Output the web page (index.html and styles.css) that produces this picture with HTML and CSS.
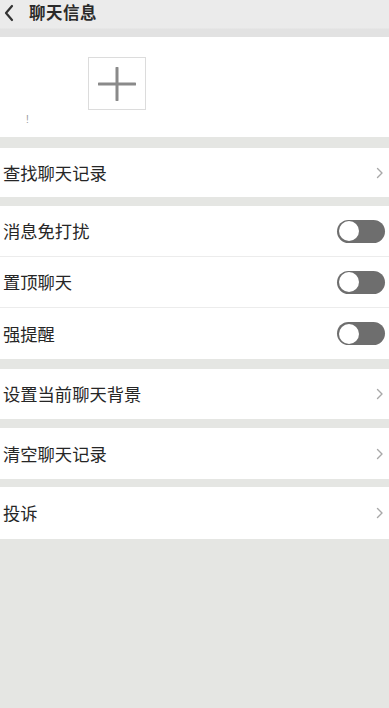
FILE: index.html
```html
<!DOCTYPE html>
<html lang="zh-CN">
<head>
<meta charset="utf-8">
<title>聊天信息</title>
<link rel="stylesheet" href="styles.css">
</head>
<body>
<div class="page">
  <header class="topbar">
    <svg class="back" width="12" height="18" viewBox="0 0 12 18"><path d="M9 2 L3 9 L9 16" fill="none" stroke="#333" stroke-width="2.2" stroke-linecap="round" stroke-linejoin="round"/></svg>
    <span class="title">聊天信息</span>
  </header>

  <section class="members">
    <div class="add-box">
      <svg width="38" height="34" viewBox="0 0 38 34"><path d="M1 17 H37 M19 1 V33" stroke="#8a8a8a" stroke-width="3" stroke-linecap="round"/></svg>
    </div>
    <span class="mark">!</span>
  </section>

  <div class="gap g1"></div>
  <div class="row r49"><span class="label">查找聊天记录</span><svg class="chev" width="8" height="12" viewBox="0 0 8 12"><path d="M1.5 1.5 L6 6 L1.5 10.5" fill="none" stroke="#a8a8a8" stroke-width="1.4" stroke-linecap="round" stroke-linejoin="round"/></svg></div>

  <div class="gap g2"></div>
  <div class="group">
    <div class="row r50 line"><span class="label">消息免打扰</span><span class="toggle"><span class="knob"></span></span></div>
    <div class="row r50 line"><span class="label">置顶聊天</span><span class="toggle"><span class="knob"></span></span></div>
    <div class="row r51"><span class="label">强提醒</span><span class="toggle"><span class="knob"></span></span></div>
  </div>

  <div class="gap g3"></div>
  <div class="row r50"><span class="label">设置当前聊天背景</span><svg class="chev" width="8" height="12" viewBox="0 0 8 12"><path d="M1.5 1.5 L6 6 L1.5 10.5" fill="none" stroke="#a8a8a8" stroke-width="1.4" stroke-linecap="round" stroke-linejoin="round"/></svg></div>

  <div class="gap g4"></div>
  <div class="row r51"><span class="label">清空聊天记录</span><svg class="chev" width="8" height="12" viewBox="0 0 8 12"><path d="M1.5 1.5 L6 6 L1.5 10.5" fill="none" stroke="#a8a8a8" stroke-width="1.4" stroke-linecap="round" stroke-linejoin="round"/></svg></div>

  <div class="gap g5"></div>
  <div class="row r52"><span class="label">投诉</span><svg class="chev" width="8" height="12" viewBox="0 0 8 12"><path d="M1.5 1.5 L6 6 L1.5 10.5" fill="none" stroke="#a8a8a8" stroke-width="1.4" stroke-linecap="round" stroke-linejoin="round"/></svg></div>

  <div class="rest"></div>
</div>
</body>
</html>
```

FILE: styles.css
```css
html, body {
  margin: 0;
  padding: 0;
}
body {
  background: #e5e6e3;
  font-family: "Noto Sans CJK SC", "Noto Sans", sans-serif;
  color: #2e2e2e;
}
.page {
  width: 389px;
  height: 708px;
  display: flex;
  flex-direction: column;
  overflow: hidden;
}
.topbar {
  height: 37px;
  flex: none;
  display: flex;
  align-items: flex-start;
  gap: 14px;
  padding: 3px 0 0 3px;
  box-sizing: border-box;
  background: linear-gradient(#ebebeb 0, #ebebeb 28px, #e2e2e2 29px, #e2e2e2 37px);
}
.back {
  margin-top: 1px;
}
.title {
  font-size: 16.5px;
  font-weight: 700;
  line-height: 18px;
  color: #2a2a2a;
  letter-spacing: 0.5px;
}
.members {
  height: 100px;
  flex: none;
  background: #fff;
  position: relative;
}
.add-box {
  position: absolute;
  left: 88px;
  top: 20px;
  width: 56px;
  height: 51px;
  border: 1px solid #dcdcdc;
  display: flex;
  align-items: center;
  justify-content: center;
}
.mark {
  position: absolute;
  left: 26px;
  top: 77px;
  font-size: 10px;
  color: #999;
  font-family: "Liberation Sans", sans-serif;
}
.gap { flex: none; }
.g1 { height: 11px; }
.g2 { height: 9px; }
.g3 { height: 10px; }
.g4 { height: 9px; }
.g5 { height: 8px; }
.group {
  background: #fff;
  flex: none;
}
.row {
  flex: none;
  background: #fff;
  display: flex;
  align-items: center;
  justify-content: space-between;
  padding: 0 4px 0 3px;
  box-sizing: border-box;
}
.r49 { height: 49px; }
.r50 { height: 50px; }
.r51 { height: 51px; }
.r52 { height: 52px; }
.line {
  height: 51px;
  border-bottom: 1px solid #ececec;
}
.label {
  font-size: 17.3px;
  line-height: 20px;
  color: #262626;
}
.chev {
  flex: none;
  margin-right: 1px;
}
.toggle {
  width: 48px;
  height: 23px;
  border-radius: 12px;
  background: #6e6e6e;
  position: relative;
  flex: none;
}
.knob {
  position: absolute;
  left: 1.5px;
  top: 1.5px;
  width: 20px;
  height: 20px;
  border-radius: 50%;
  background: #fff;
}
.rest {
  flex: 1;
}
```
